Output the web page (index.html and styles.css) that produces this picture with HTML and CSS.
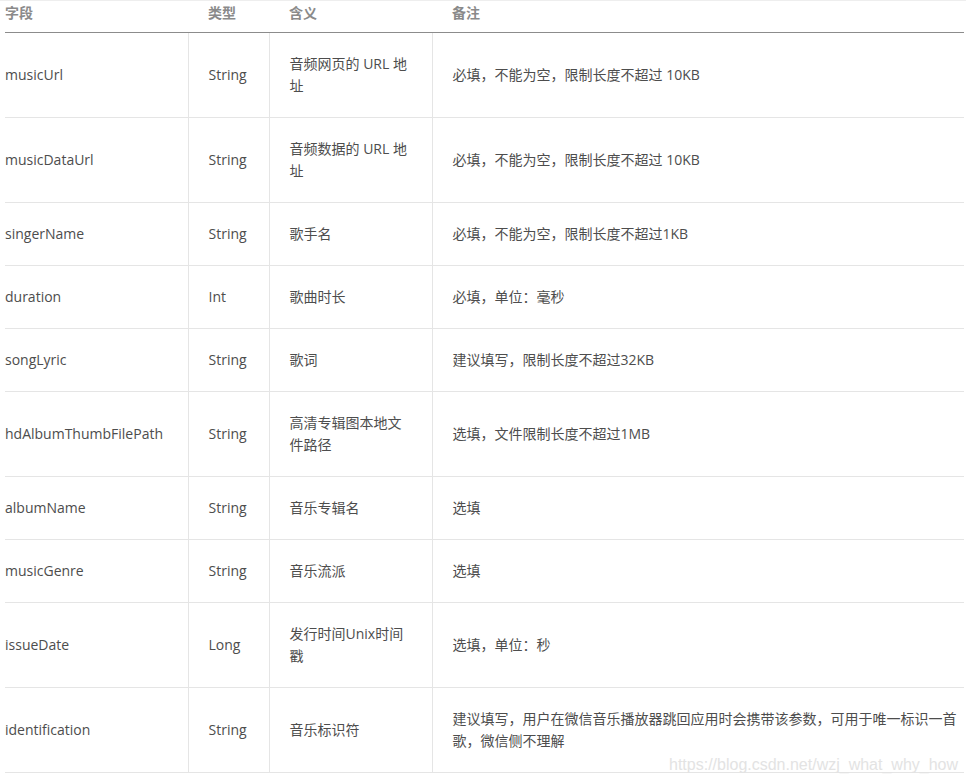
FILE: index.html
```html
<!DOCTYPE html>
<html lang="zh-CN">
<head>
<meta charset="utf-8">
<title>音乐参数</title>
<link rel="stylesheet" href="styles.css">
</head>
<body>
<div class="page">
  <table class="params">
    <colgroup>
      <col class="c-field">
      <col class="c-type">
      <col class="c-mean">
      <col class="c-note">
    </colgroup>
    <thead>
      <tr><th>字段</th><th>类型</th><th>含义</th><th>备注</th></tr>
    </thead>
    <tbody>
      <tr><td>musicUrl</td><td>String</td><td>音频网页的 URL 地址</td><td>必填，不能为空，限制长度不超过 10KB</td></tr>
      <tr><td>musicDataUrl</td><td>String</td><td>音频数据的 URL 地址</td><td>必填，不能为空，限制长度不超过 10KB</td></tr>
      <tr><td>singerName</td><td>String</td><td>歌手名</td><td>必填，不能为空，限制长度不超过1KB</td></tr>
      <tr><td>duration</td><td>Int</td><td>歌曲时长</td><td>必填，单位：毫秒</td></tr>
      <tr><td>songLyric</td><td>String</td><td>歌词</td><td>建议填写，限制长度不超过32KB</td></tr>
      <tr><td>hdAlbumThumbFilePath</td><td>String</td><td>高清专辑图本地文件路径</td><td>选填，文件限制长度不超过1MB</td></tr>
      <tr><td>albumName</td><td>String</td><td>音乐专辑名</td><td>选填</td></tr>
      <tr><td>musicGenre</td><td>String</td><td>音乐流派</td><td>选填</td></tr>
      <tr><td>issueDate</td><td>Long</td><td>发行时间Unix时间戳</td><td>选填，单位：秒</td></tr>
      <tr><td>identification</td><td>String</td><td>音乐标识符</td><td>建议填写，用户在微信音乐播放器跳回应用时会携带该参数，可用于唯一标识一首歌，微信侧不理解</td></tr>
    </tbody>
  </table>
  <div class="watermark">https://blog.csdn.net/wzj_what_why_how</div>
</div>
</body>
</html>
```
FILE: styles.css
```css
html, body {
  margin: 0;
  padding: 0;
  background: #fff;
}

.page {
  position: relative;
  border-top: 1px solid #eeeeee;
  padding: 0 2px 0 5px;
  height: 782px;
}

.params {
  border-collapse: collapse;
  table-layout: fixed;
  width: 959px;
  font-family: "Open Sans", "Noto Sans CJK SC", sans-serif;
  font-size: 14px;
  line-height: 22px;
  color: #4d4d4d;
}

.c-field { width: 183px; }
.c-type { width: 81px; }
.c-mean { width: 163px; }
.c-note { width: 532px; }

.params th {
  text-align: left;
  font-weight: bold;
  color: #8a8a8a;
  padding: 1px 20px 8px;
  border-bottom: 1px solid #8c8c8c;
}

.params td {
  padding: 20px 20px;
  vertical-align: middle;
  border-bottom: 1px solid #e5e5e5;
  border-left: 1px solid #e5e5e5;
  word-wrap: break-word;
}

.params th:first-child,
.params td:first-child {
  padding-left: 0;
}

.params td:first-child {
  border-left: none;
}

.params td:last-child {
  padding-right: 0;
}

.watermark {
  position: absolute;
  left: 669px;
  top: 754px;
  font-family: "Liberation Sans", Arial, sans-serif;
  font-size: 16px;
  line-height: 20px;
  color: #e3e3e3;
  white-space: nowrap;
}
```
